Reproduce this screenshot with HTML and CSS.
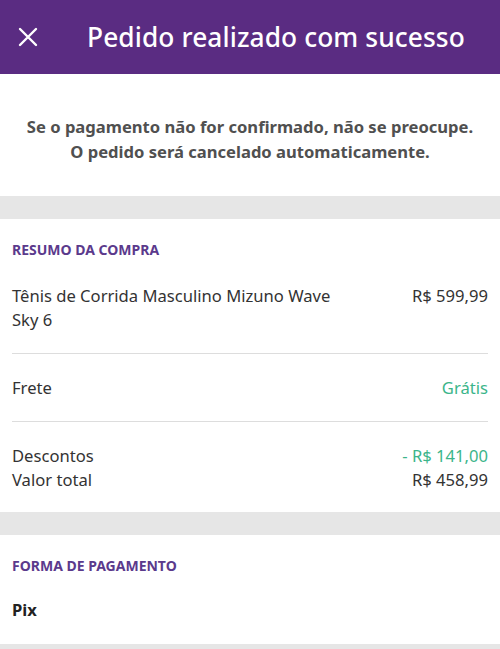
FILE: index.html
```html
<!DOCTYPE html>
<html lang="pt-BR">
<head>
  <meta charset="UTF-8">
  <title>Pedido realizado com sucesso</title>
  <link rel="stylesheet" href="styles.css">
</head>
<body>
  <header class="topbar">
    <button class="close-btn" aria-label="Fechar">
      <svg width="20" height="20" viewBox="0 0 20 20">
        <path d="M2 2 L18 18 M18 2 L2 18" stroke="#fff" stroke-width="2.4" stroke-linecap="round"/>
      </svg>
    </button>
    <h1>Pedido realizado com sucesso</h1>
  </header>

  <section class="notice">
    <p>Se o pagamento não for confirmado, não se preocupe.<br>O pedido será cancelado automaticamente.</p>
  </section>

  <div class="spacer"></div>

  <section class="card">
    <h2>Resumo da compra</h2>
    <div class="row product">
      <span class="name">Tênis de Corrida Masculino Mizuno Wave Sky 6</span>
      <span class="value">R$ 599,99</span>
    </div>
    <div class="row single">
      <span>Frete</span>
      <span class="value green">Grátis</span>
    </div>
    <div class="row totals">
      <div class="line"><span>Descontos</span><span class="value green">- R$ 141,00</span></div>
      <div class="line"><span>Valor total</span><span class="value">R$ 458,99</span></div>
    </div>
  </section>

  <div class="spacer"></div>

  <section class="card">
    <h2>Forma de pagamento</h2>
    <div class="payment">Pix</div>
  </section>

  <div class="spacer"></div>
</body>
</html>
```

FILE: styles.css
```css
body {
  margin: 0;
  background: #fff;
  font-family: "Noto Sans", "Open Sans", sans-serif;
  color: #333;
}

.topbar {
  display: flex;
  align-items: center;
  height: 74px;
  background: #5a2c82;
  color: #fff;
  padding: 0 16px;
}

.close-btn {
  background: none;
  border: 0;
  padding: 0;
  width: 24px;
  height: 24px;
  display: flex;
  align-items: center;
  justify-content: center;
  cursor: pointer;
}

.topbar h1 {
  margin: 0 0 0 47px;
  font-size: 26.3px;
  font-weight: 500;
  letter-spacing: 0.1px;
}

.notice {
  padding: 40px 12px 32px;
  text-align: center;
}

.notice p {
  margin: 0;
  font-size: 16.6px;
  font-weight: 700;
  line-height: 25px;
  color: #505050;
}

.spacer {
  height: 23px;
  background: #e6e6e6;
}

.card {
  padding: 0 12px;
}

.card h2 {
  margin: 0;
  padding: 22px 0 0;
  font-size: 14px;
  font-weight: 700;
  text-transform: uppercase;
  color: #5b3a8c;
  line-height: 18px;
}

.row {
  display: flex;
  justify-content: space-between;
  font-size: 16.6px;
  line-height: 24px;
  color: #333;
}

.row + .row {
  border-top: 1px solid #ddd;
}

.product {
  padding: 25px 0 21px;
}

.product .name {
  max-width: 340px;
}

.single {
  padding: 22px 0 21px;
}

.totals {
  flex-direction: column;
  padding: 22px 0 20px;
}

.line {
  display: flex;
  justify-content: space-between;
}

.value {
  white-space: nowrap;
  text-align: right;
}

.green {
  color: #3bb58a;
}

.payment {
  padding: 23px 0 22px;
  font-size: 16.6px;
  font-weight: 700;
  line-height: 24px;
  color: #222;
}
```
